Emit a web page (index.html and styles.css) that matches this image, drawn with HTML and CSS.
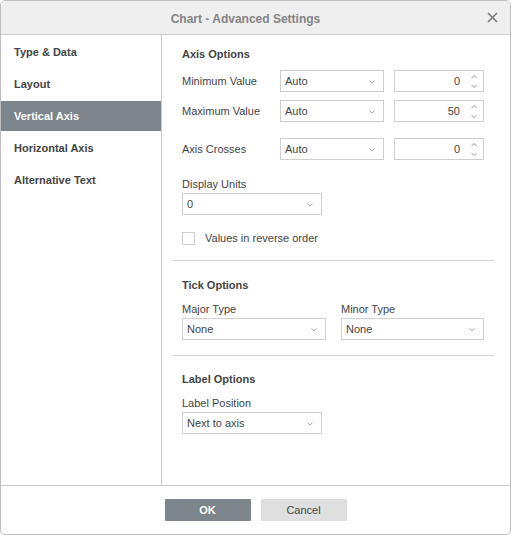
FILE: index.html
```html
<!DOCTYPE html>
<html>
<head>
<meta charset="utf-8">
<link rel="stylesheet" href="styles.css">
</head>
<body>
<div class="dialog">
  <div class="header">
    <span class="title">Chart - Advanced Settings</span>
    <span class="close"><svg width="11" height="11" viewBox="0 0 11 11"><path d="M1 1L10 10M10 1L1 10" stroke="#7a7a7a" stroke-width="1.6" fill="none"/></svg></span>
  </div>
  <div class="body">
    <div class="sidebar">
      <div class="nav-item">Type &amp; Data</div>
      <div class="nav-item">Layout</div>
      <div class="nav-item active">Vertical Axis</div>
      <div class="nav-item">Horizontal Axis</div>
      <div class="nav-item">Alternative Text</div>
    </div>
    <div class="content">
      <div class="heading">Axis Options</div>
      <div class="axis-grid">
        <div class="row">
          <span class="label">Minimum Value</span>
          <div class="select w104"><span>Auto</span><svg class="chev" width="6" height="4" viewBox="0 0 6 4"><polyline points="0.5,0.5 3,3 5.5,0.5" fill="none" stroke="#a8a8a8"/></svg></div>
          <div class="spin"><span>0</span><svg class="arrows" width="6" height="13" viewBox="0 0 6 13"><polyline points="0.5,3 3,0.5 5.5,3" fill="none" stroke="#909090"/><polyline points="0.5,10 3,12.5 5.5,10" fill="none" stroke="#909090"/></svg></div>
        </div>
        <div class="row">
          <span class="label">Maximum Value</span>
          <div class="select w104"><span>Auto</span><svg class="chev" width="6" height="4" viewBox="0 0 6 4"><polyline points="0.5,0.5 3,3 5.5,0.5" fill="none" stroke="#a8a8a8"/></svg></div>
          <div class="spin"><span>50</span><svg class="arrows" width="6" height="13" viewBox="0 0 6 13"><polyline points="0.5,3 3,0.5 5.5,3" fill="none" stroke="#909090"/><polyline points="0.5,10 3,12.5 5.5,10" fill="none" stroke="#909090"/></svg></div>
        </div>
        <div class="row row-gap">
          <span class="label">Axis Crosses</span>
          <div class="select w104"><span>Auto</span><svg class="chev" width="6" height="4" viewBox="0 0 6 4"><polyline points="0.5,0.5 3,3 5.5,0.5" fill="none" stroke="#a8a8a8"/></svg></div>
          <div class="spin"><span>0</span><svg class="arrows" width="6" height="13" viewBox="0 0 6 13"><polyline points="0.5,3 3,0.5 5.5,3" fill="none" stroke="#909090"/><polyline points="0.5,10 3,12.5 5.5,10" fill="none" stroke="#909090"/></svg></div>
        </div>
      </div>
      <div class="field units">
        <div class="field-label">Display Units</div>
        <div class="select w140"><span>0</span><svg class="chev" width="6" height="4" viewBox="0 0 6 4"><polyline points="0.5,0.5 3,3 5.5,0.5" fill="none" stroke="#a8a8a8"/></svg></div>
      </div>
      <label class="check">
        <span class="box"></span>
        <span>Values in reverse order</span>
      </label>
      <div class="sep"></div>
      <div class="heading">Tick Options</div>
      <div class="pair">
        <div class="field">
          <div class="field-label">Major Type</div>
          <div class="select w144"><span>None</span><svg class="chev" width="6" height="4" viewBox="0 0 6 4"><polyline points="0.5,0.5 3,3 5.5,0.5" fill="none" stroke="#a8a8a8"/></svg></div>
        </div>
        <div class="field">
          <div class="field-label">Minor Type</div>
          <div class="select w143"><span>None</span><svg class="chev" width="6" height="4" viewBox="0 0 6 4"><polyline points="0.5,0.5 3,3 5.5,0.5" fill="none" stroke="#a8a8a8"/></svg></div>
        </div>
      </div>
      <div class="sep sep2"></div>
      <div class="heading">Label Options</div>
      <div class="field">
        <div class="field-label">Label Position</div>
        <div class="select w140"><span>Next to axis</span><svg class="chev" width="6" height="4" viewBox="0 0 6 4"><polyline points="0.5,0.5 3,3 5.5,0.5" fill="none" stroke="#a8a8a8"/></svg></div>
      </div>
    </div>
  </div>
  <div class="footer">
    <button class="btn primary">OK</button>
    <button class="btn">Cancel</button>
  </div>
</div>
</body>
</html>
```
FILE: styles.css
```css
html, body {
  margin: 0;
  padding: 0;
  background: #ffffff;
}
body {
  font-family: "Liberation Sans", Arial, sans-serif;
  font-size: 11px;
  color: #444444;
}
.dialog {
  box-sizing: border-box;
  width: 511px;
  height: 535px;
  border: 1px solid #bfbfbf;
  border-radius: 5px;
  overflow: hidden;
  display: flex;
  flex-direction: column;
  background: #fff;
}
.header {
  position: relative;
  height: 33px;
  flex: none;
  background: #efefef;
  border-bottom: 1px solid #cbcbcb;
  display: flex;
  align-items: center;
  justify-content: center;
  padding-right: 20px;
}
.title {
  font-size: 12px;
  font-weight: bold;
  color: #848484;
  margin-top: 2px;
}
.close {
  position: absolute;
  right: 12px;
  top: 11px;
  width: 11px;
  height: 11px;
  display: block;
}
.close svg { display: block; }
.body {
  flex: 1;
  display: flex;
  min-height: 0;
}
.sidebar {
  width: 160px;
  flex: none;
  border-right: 1px solid #cbcbcb;
  padding-top: 2px;
  box-sizing: content-box;
}
.nav-item {
  height: 30px;
  margin-bottom: 2px;
  padding-left: 13px;
  display: flex;
  align-items: center;
  font-weight: bold;
  color: #444;
}
.nav-item.active {
  background: #7d858c;
  color: #ffffff;
}
.content {
  flex: 1;
  padding: 12px 26px 0 20px;
  display: flex;
  flex-direction: column;
}
.heading {
  font-weight: bold;
  line-height: 14px;
  height: 14px;
}
.axis-grid {
  margin-top: 9px;
  display: flex;
  flex-direction: column;
  gap: 8px;
}
.row {
  display: flex;
  align-items: center;
  height: 22px;
}
.row.row-gap { margin-top: 8px; }
.label {
  width: 98px;
  flex: none;
}
.select, .spin {
  box-sizing: border-box;
  height: 22px;
  border: 1px solid #cfcfcf;
  display: flex;
  align-items: center;
  background: #fff;
  color: #444;
}
.select {
  padding: 0 8px 0 4px;
  justify-content: space-between;
}
.select span { margin-top: -1px; }
.select .chev { flex: none; margin-top: 1px; }
.w104 { width: 104px; }
.w140 { width: 140px; }
.w144 { width: 144px; }
.w143 { width: 143px; }
.spin {
  width: 90px;
  margin-left: 10px;
  justify-content: flex-end;
  padding-right: 6px;
}
.spin span { margin-right: 11px; margin-top: -1px; }
.spin .arrows { flex: none; }
.field {
  display: flex;
  flex-direction: column;
}
.field-label {
  line-height: 14px;
  height: 14px;
  margin-bottom: 2px;
}
.units { margin-top: 17px; }
.check {
  margin-top: 17px;
  display: flex;
  align-items: center;
  height: 13px;
}
.check .box {
  box-sizing: border-box;
  width: 13px;
  height: 13px;
  border: 1px solid #cfcfcf;
  margin-right: 10px;
  flex: none;
}
.check span + span { margin-top: -2px; }
.sep {
  height: 1px;
  background: #d4d4d4;
  margin: 15px -10px 17px -10px;
}
.sep2 { margin-top: 15px; margin-bottom: 16px; }
.pair {
  margin-top: 10px;
  display: flex;
  gap: 15px;
}
.heading + .field { margin-top: 10px; }
.footer {
  flex: none;
  height: 48px;
  border-top: 1px solid #cbcbcb;
  display: flex;
  align-items: center;
  justify-content: center;
  gap: 10px;
}
.btn {
  width: 86px;
  height: 22px;
  border: none;
  border-radius: 1px;
  background: #dfdfdf;
  color: #444;
  font-family: "Liberation Sans", Arial, sans-serif;
  font-size: 11px;
  padding: 0;
}
.btn.primary {
  background: #7d858c;
  color: #fff;
  font-weight: bold;
}
```
